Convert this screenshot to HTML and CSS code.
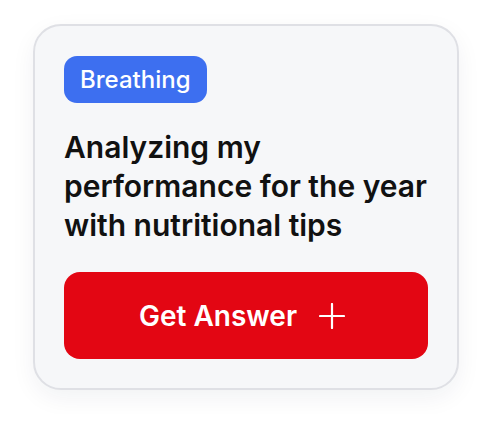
FILE: index.html
```html
<!DOCTYPE html>
<html lang="en">
<head>
    <meta charset="UTF-8">
    <meta name="viewport" content="width=device-width, initial-scale=1.0">
    <title>Prompt Card</title>
    <link rel="stylesheet" href="styles.css">
</head>
<body>
    <div class="page">
        <!-- Prompt card -->
        <div class="card">
            <span class="tag">Breathing</span>
            <h2 class="prompt">Analyzing my performance for the year with nutritional tips</h2>
            <button class="answer-btn">
                Get Answer
                <svg class="plus" width="26" height="26" viewBox="0 0 26 26" fill="none" stroke="#fff" stroke-width="2.2" stroke-linecap="round">
                    <path d="M13 1v24M1 13h24"/>
                </svg>
            </button>
        </div>
    </div>
</body>
</html>
```

FILE: styles.css
```css
body {
    font-family: 'Inter', 'Noto Sans', sans-serif;
    margin: 0;
    padding: 0;
    background: #fff;
    color: #111;
}

.page {
    padding: 24px 33px;
}

.card {
    display: flex;
    flex-direction: column;
    align-items: flex-start;
    width: 426px;
    box-sizing: border-box;
    padding: 30px 29px 29px;
    background-color: #f6f7f9;
    border: 2px solid #dfe0e5;
    border-radius: 28px;
    box-shadow: 0 8px 24px rgba(20, 30, 60, 0.06);
}

.tag {
    display: inline-block;
    padding: 0 16px;
    height: 47px;
    line-height: 47px;
    font-size: 24px;
    font-weight: 500;
    color: #fff;
    background-color: #3d6ff0;
    border-radius: 13px;
}

.prompt {
    margin: 25px 0 27px;
    font-size: 30px;
    line-height: 39px;
    font-weight: 600;
    color: #111;
}

.answer-btn {
    display: flex;
    align-items: center;
    justify-content: center;
    gap: 22px;
    width: 100%;
    height: 87px;
    padding: 0 8px 0 0;
    font-family: inherit;
    font-size: 28px;
    font-weight: 600;
    color: #fff;
    background-color: #e30613;
    border: none;
    border-radius: 16px;
    cursor: pointer;
}
```
